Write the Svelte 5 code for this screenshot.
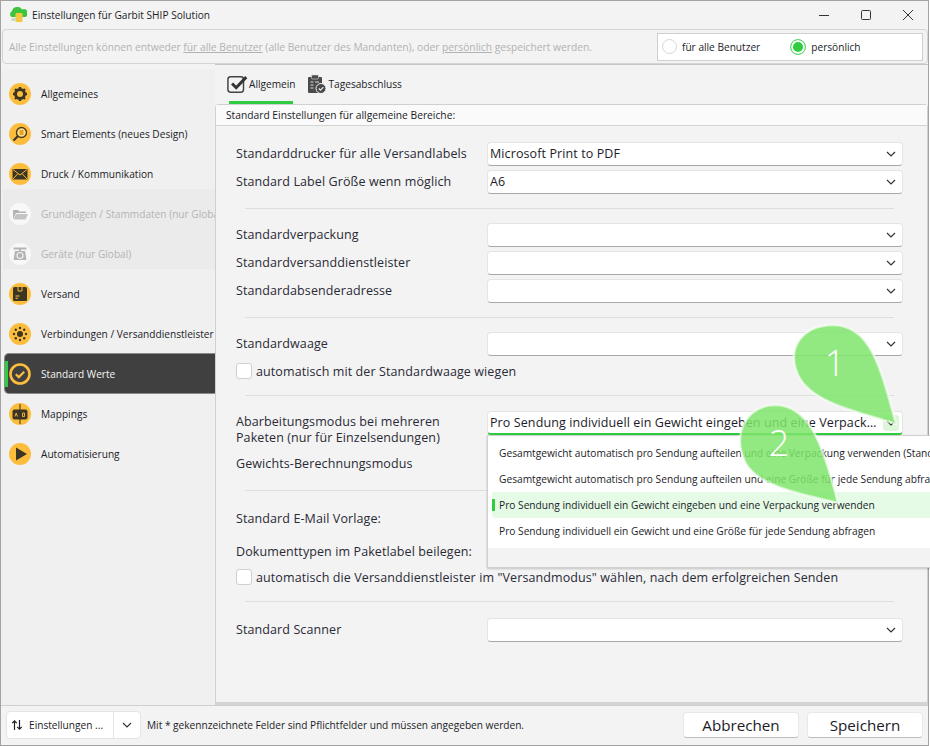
<script>
	const navItems = [
		{ label: 'Allgemeines', icon: 'gear' },
		{ label: 'Smart Elements (neues Design)', icon: 'search' },
		{ label: 'Druck / Kommunikation', icon: 'mail' },
		{ label: 'Grundlagen / Stammdaten (nur Global)', icon: 'folder', disabled: true },
		{ label: 'Geräte (nur Global)', icon: 'scale', disabled: true },
		{ label: 'Versand', icon: 'box' },
		{ label: 'Verbindungen / Versanddienstleister', icon: 'hub' },
		{ label: 'Standard Werte', icon: 'check', active: true },
		{ label: 'Mappings', icon: 'map' },
		{ label: 'Automatisierung', icon: 'play' }
	];

	const options = [
		'Gesamtgewicht automatisch pro Sendung aufteilen und eine Verpackung verwenden (Standard)',
		'Gesamtgewicht automatisch pro Sendung aufteilen und eine Größe für jede Sendung abfragen',
		'Pro Sendung individuell ein Gewicht eingeben und eine Verpackung verwenden',
		'Pro Sendung individuell ein Gewicht und eine Größe für jede Sendung abfragen'
	];
</script>

{#snippet chevron()}
	<svg class="chev" width="10" height="6" viewBox="0 0 10 6"><path d="M1 1l4 4 4-4" fill="none" stroke="#333" stroke-width="1.2" /></svg>
{/snippet}

{#snippet select(value = '', open = false)}
	<div class="select" class:open>
		<span class="value">{value}</span>
		<span class="arrow">{@render chevron()}</span>
	</div>
{/snippet}

{#snippet navIcon(name)}
	<svg width="22" height="22" viewBox="0 0 22 22">
		{#if name === 'gear'}
			<circle cx="11" cy="11" r="11" fill="#fdbd3c" />
			<circle cx="11" cy="11" r="4.5" fill="none" stroke="#3b3523" stroke-width="3" />
			<path d="M11 4v3M11 15v3M4 11h3M15 11h3M6 6l2 2M14 14l2 2M16 6l-2 2M8 14l-2 2" stroke="#3b3523" stroke-width="2.4" />
		{:else if name === 'search'}
			<circle cx="11" cy="11" r="11" fill="#fdbd3c" />
			<circle cx="12.5" cy="9.5" r="5" fill="#fde08e" stroke="#4a3a1a" stroke-width="1.4" />
			<rect x="10.5" y="7" width="4" height="5" fill="#e8a020" />
			<path d="M9 13l-4.5 4.5" stroke="#3b3523" stroke-width="2.2" />
		{:else if name === 'mail'}
			<circle cx="11" cy="11" r="11" fill="#fdbd3c" />
			<rect x="3.5" y="6" width="15" height="10.5" fill="#3b3523" />
			<path d="M4 6.5l7 5.5 7-5.5M4 16l5-5.5M18 16l-5-5.5" fill="none" stroke="#fdbd3c" stroke-width="1" />
		{:else if name === 'folder'}
			<circle cx="11" cy="11" r="11" fill="#f8f8f8" />
			<path d="M4 7h5l1.5 1.5H17V10H7l-3 6z" fill="#b4b4b4" />
			<path d="M7 11h12l-2.5 5.5H4.500z" fill="#c4c4c4" />
		{:else if name === 'scale'}
			<circle cx="11" cy="11" r="11" fill="#f8f8f8" />
			<rect x="4.500" y="4.500" width="13" height="2" fill="#b4b4b4" />
			<rect x="10" y="6" width="2" height="2" fill="#b4b4b4" />
			<path d="M6 8h10l1.500 9h-13z" fill="#b4b4b4" />
			<circle cx="11" cy="12.500" r="3" fill="none" stroke="#f2f2f2" stroke-width="1.200" />
		{:else if name === 'box'}
			<circle cx="11" cy="11" r="11" fill="#fdbd3c" />
			<rect x="4" y="4" width="14" height="14" rx="1.500" fill="#3b3523" />
			<path d="M9 4v4h4V4" fill="none" stroke="#fdbd3c" stroke-width="1" />
			<path d="M6.500 13h4M6.500 15.200h2.500" stroke="#fdbd3c" stroke-width="1.100" />
		{:else if name === 'hub'}
			<circle cx="11" cy="11" r="11" fill="#fdbd3c" />
			<circle cx="11" cy="11" r="3" fill="#3b3523" />
			<g fill="#3b3523">
				<circle cx="11" cy="5" r="1.200" /><circle cx="11" cy="17" r="1.200" /><circle cx="5" cy="11" r="1.200" /><circle cx="17" cy="11" r="1.200" />
				<circle cx="6.800" cy="6.800" r="1.200" /><circle cx="15.200" cy="6.800" r="1.200" /><circle cx="6.800" cy="15.200" r="1.200" /><circle cx="15.200" cy="15.200" r="1.200" />
			</g>
		{:else if name === 'check'}
			<circle cx="11" cy="11" r="9.500" fill="none" stroke="#fdbd3c" stroke-width="2.600" />
			<path d="M6.800 11.300l3 2.800 5.400-5.400" fill="none" stroke="#fdbd3c" stroke-width="2.200" />
		{:else if name === 'map'}
			<circle cx="11" cy="11" r="11" fill="#fdbd3c" />
			<rect x="3.500" y="6.500" width="15" height="10" rx="2" fill="#3b3523" />
			<path d="M11 1v20" stroke="#3b3523" stroke-width="1" />
			<path d="M6 13.500l1.200-3.500 1.200 3.500M13.500 10h2v3.500h-2z" fill="none" stroke="#fdbd3c" stroke-width=".9" />
		{:else}
			<circle cx="11" cy="11" r="11" fill="#fdbd3c" />
			<path d="M7 4.500l11 6.500-11 6.500z" fill="#3b3523" />
		{/if}
	</svg>
{/snippet}

<div class="window">
	<header class="titlebar">
		<svg class="logo" width="18" height="16" viewBox="0 0 18 16">
			<path d="M2.500 10a3.500 3.500 0 0 1 .5-6A5.500 5.500 0 0 1 13 2.500a4 4 0 0 1 3.500 7.500z" fill="#3cc43c" />
			<rect x="6.500" y="6" width="7" height="9" rx="1" fill="#f5c842" />
			<rect x="2.500" y="11" width="4" height="3" fill="#c6dcc6" />
		</svg>
		<span class="title">Einstellungen für Garbit SHIP Solution</span>
		<div class="wincontrols">
			<svg width="12" height="12" viewBox="0 0 12 12"><path d="M1 6.500h10" stroke="#333" stroke-width="1" /></svg>
			<svg width="12" height="12" viewBox="0 0 12 12"><rect x="1.500" y="1.500" width="9" height="9" rx="1" fill="none" stroke="#333" stroke-width="1" /></svg>
			<svg width="12" height="12" viewBox="0 0 12 12"><path d="M1 1l10 10M11 1L1 11" stroke="#333" stroke-width="1" /></svg>
		</div>
	</header>

	<div class="hint">
		<p>Alle Einstellungen können entweder <u>für alle Benutzer</u> (alle Benutzer des Mandanten), oder <u>persönlich</u> gespeichert werden.</p>
		<div class="scope">
			<label><span class="radio"></span>für alle Benutzer</label>
			<label><span class="radio on"></span>persönlich</label>
		</div>
	</div>

	<div class="body">
		<nav class="sidebar">
			{#each navItems as item}
				<div class="navitem" class:disabled={item.disabled} class:active={item.active}>
					{@render navIcon(item.icon)}
					<span>{item.label}</span>
				</div>
			{/each}
		</nav>

		<main class="content">
			<div class="tabs">
				<div class="tab current">
					<svg width="22" height="22" viewBox="0 0 24 22">
						<rect x="1" y="3" width="17" height="17" rx="3" fill="#f4f4f4" stroke="#444" stroke-width="1.600" />
						<path d="M5.500 10.500l4.500 4.500L21 3.500" fill="none" stroke="#333" stroke-width="3.200" />
					</svg>
					<span>Allgemein</span>
				</div>
				<div class="tab">
					<svg width="20" height="20" viewBox="0 0 20 20">
						<rect x="1" y="3" width="14" height="16" rx="1" fill="#4a4a4a" />
						<rect x="4.500" y="1" width="7" height="4" rx="1" fill="#4a4a4a" stroke="#ddd" stroke-width=".6" />
						<path d="M3.500 8h3M3.500 11h3M3.500 14h3M8 8h4" stroke="#ddd" stroke-width="1" />
						<circle cx="14" cy="14.500" r="5" fill="#4a4a4a" stroke="#f2f2f2" />
						<path d="M11.800 14.500l1.600 1.600 3-3" fill="none" stroke="#eee" stroke-width="1.200" />
					</svg>
					<span>Tagesabschluss</span>
				</div>
			</div>

			<section class="panel">
				<div class="panelhead">Standard Einstellungen für allgemeine Bereiche:</div>
				<div class="form">
					<div class="group">
						<div class="row"><span>Standarddrucker für alle Versandlabels</span>{@render select('Microsoft Print to PDF')}</div>
						<div class="row"><span>Standard Label Größe wenn möglich</span>{@render select('A6')}</div>
					</div>
					<div class="group">
						<div class="row"><span>Standardverpackung</span>{@render select()}</div>
						<div class="row"><span>Standardversanddienstleister</span>{@render select()}</div>
						<div class="row"><span>Standardabsenderadresse</span>{@render select()}</div>
					</div>
					<div class="group">
						<div class="row"><span>Standardwaage</span>{@render select()}</div>
						<label class="check"><span class="box"></span>automatisch mit der Standardwaage wiegen</label>
					</div>
					<div class="group">
						<div class="row tall"><span>Abarbeitungsmodus bei mehreren<br />Paketen (nur für Einzelsendungen)</span>{@render select('Pro Sendung individuell ein Gewicht eingeben und eine Verpackung verwenden', true)}</div>
						<div class="row"><span>Gewichts-Berechnungsmodus</span></div>
					</div>
					<div class="group">
						<div class="row mail"><span>Standard E-Mail Vorlage:</span></div>
						<div class="row doc"><span>Dokumenttypen im Paketlabel beilegen:</span></div>
						<label class="check"><span class="box"></span>automatisch die Versanddienstleister im "Versandmodus" wählen, nach dem erfolgreichen Senden</label>
					</div>
					<div class="group last">
						<div class="row"><span>Standard Scanner</span>{@render select()}</div>
					</div>
				</div>
			</section>
		</main>
	</div>

	<footer class="footer">
		<div class="split">
			<span class="splitmain">
				<svg width="12" height="12" viewBox="0 0 12 12"><path d="M3.500 11V2M1.200 4.200L3.500 1.800l2.300 2.400M8.500 1v9M6.200 7.800l2.300 2.400 2.300-2.400" fill="none" stroke="#222" stroke-width="1.200" /></svg>
				Einstellungen ...
			</span>
			<span class="splitarrow">{@render chevron()}</span>
		</div>
		<p>Mit * gekennzeichnete Felder sind Pflichtfelder und müssen angegeben werden.</p>
		<button>Abbrechen</button>
		<button>Speichern</button>
	</footer>

	<div class="dropdown">
		<div class="options">
			{#each options as option, i}
				<div class="option" class:selected={i === 2}>{option}</div>
			{/each}
		</div>
	</div>

	<svg class="drops" width="930" height="746" viewBox="0 0 930 746">
		<path class="drop" d="M896 424C860 412 812 404 798 375C786 348 802 325 834 325C870 326 880 365 896 424Z" />
		<path class="drop" d="M838 503C802 494 758 487 745 462C732 434 746 405 776 405C808 406 822 440 838 503Z" />
		<text x="835" y="376">1</text>
		<text x="779" y="456">2</text>
	</svg>
</div>

<style>
	:global(body) {
		margin: 0;
		background: #fff;
	}

	.window {
		position: relative;
		width: 929px;
		height: 746px;
		box-sizing: border-box;
		border: 1px solid #a3a3a3;
		background: #f3f3f3;
		color: #1c1c28;
		font-family: 'Open Sans', 'Noto Sans', sans-serif;
		font-size: 10.15px;
		display: flex;
		flex-direction: column;
	}

	.titlebar {
		height: 28px;
		display: flex;
		align-items: center;
		padding: 0 0 0 8px;
		gap: 5px;
		flex: none;
	}

	.wincontrols {
		margin-left: auto;
		display: flex;
		gap: 30px;
		padding-right: 14px;
	}

	.hint {
		flex: none;
		height: 35px;
		box-sizing: border-box;
		margin: 0 0 0 1px;
		border: 1px solid #d4d4d4;
		border-radius: 4px;
		display: flex;
		align-items: center;
		justify-content: space-between;
		padding: 0 4px 0 6px;
		color: #b2b2b2;
		font-size: 10.27px;
	}

	.hint p {
		margin: 0;
	}

	.scope {
		background: #fff;
		border: 1px solid #cfcfcf;
		width: 266px;
		height: 28px;
		box-sizing: border-box;
		display: flex;
		align-items: center;
		padding-left: 4px;
		gap: 30px;
		color: #1c1c28;
		font-size: 10.15px;
	}

	.scope label {
		display: flex;
		align-items: center;
		gap: 5px;
	}

	.radio {
		width: 15px;
		height: 15px;
		box-sizing: border-box;
		border-radius: 50%;
		border: 1px solid #d6d6d6;
		background: #fff;
	}

	.radio.on {
		width: 16px;
		height: 16px;
		background: #2ecc40;
		border: 1px solid #5fdc6c;
		box-shadow: inset 0 0 0 2px #fff;
	}

	.body {
		flex: 1;
		display: flex;
		min-height: 0;
	}

	.sidebar {
		width: 214px;
		flex: none;
		margin-top: 5px;
		background: #f0f0f0;
		display: flex;
		flex-direction: column;
		overflow: hidden;
	}

	.navitem {
		height: 40px;
		flex: none;
		box-sizing: border-box;
		padding: 10px 0 0 6px;
		display: flex;
		align-items: center;
		gap: 10px;
		white-space: nowrap;
		margin-left: 2px;
		overflow: hidden;
	}

	.navitem svg {
		flex: none;
	}

	.navitem.disabled {
		background: #ebebeb;
		color: #b4b4b4;
	}

	.navitem.active {
		position: relative;
		background: #404040;
		color: #f4f4f4;
		border-radius: 5px 0 0 5px;
		border: 1px solid #8a8a8a;
		border-right: 0;
		height: 41px;
		margin: 4px 0 -5px 3px;
		padding: 0 0 0 4px;
	}

	.navitem.active::before {
		content: '';
		position: absolute;
		left: 0;
		top: 7px;
		width: 3px;
		height: 26px;
		background: #2ecc40;
	}

	.content {
		flex: 1;
		min-width: 0;
		display: flex;
		flex-direction: column;
	}

	.tabs {
		height: 39px;
		flex: none;
		display: flex;
		align-items: center;
		padding-left: 12px;
		gap: 11px;
		border-top: 1px solid #c6c6c6;
	}

	.tab {
		display: flex;
		align-items: center;
		gap: 2px;
		height: 100%;
		box-sizing: border-box;
		padding-bottom: 2px;
		position: relative;
	}

	.tab.current {
		gap: 0;
	}

	.tab.current::after {
		content: '';
		position: absolute;
		left: 2px;
		right: 3px;
		bottom: 0;
		height: 3px;
		background: #2ecc40;
	}

	.panel {
		flex: 1;
		border: 1px solid #d0d0d0;
		border-bottom: 3px solid #d4d4d4;
		border-radius: 4px 4px 0 0;
		display: flex;
		flex-direction: column;
		min-height: 0;
	}

	.panelhead {
		height: 20px;
		flex: none;
		background: #fafafa;
		border-bottom: 1px solid #d4d4d4;
		display: flex;
		align-items: center;
		padding-left: 10px;
		font-size: 10.25px;
	}

	.form {
		padding: 16px 24px 0 20px;
		font-size: 12.5px;
		color: #2a2a36;
		letter-spacing: 0.1px;
	}

	.group {
		display: flex;
		flex-direction: column;
		gap: 4px;
		margin-bottom: 14px;
	}

	.group::after {
		content: '';
		height: 1px;
		margin: 10px 9px 0;
		background: #dedede;
	}

	.group.last {
		padding-top: 2px;
	}

	.group.last::after {
		display: none;
	}

	.row {
		display: flex;
		align-items: center;
		justify-content: space-between;
		min-height: 24px;
		line-height: 16px;
	}

	.row.tall {
		min-height: 37px;
		align-items: flex-start;
		margin-top: 1px;
	}

	.row.tall > span {
		margin-top: 3px;
	}

	.row.mail {
		margin-top: 2px;
	}

	.row.doc {
		margin: 5px 0 -2px;
	}

	.select {
		width: 416px;
		height: 24px;
		flex: none;
		box-sizing: border-box;
		background: #fff;
		border: 1px solid #e4e4e4;
		border-bottom-color: #a8a8a8;
		border-radius: 4px;
		display: flex;
		align-items: center;
		justify-content: space-between;
		padding: 0 3px 0 2px;
	}

	.select .value {
		white-space: nowrap;
		overflow: hidden;
		text-overflow: ellipsis;
		max-width: 390px;
		color: #1c1c28;
	}

	.arrow {
		width: 16px;
		height: 16px;
		display: flex;
		align-items: center;
		justify-content: center;
		border-radius: 3px;
	}

	.select.open {
		border-bottom: 2px solid #2ecc40;
	}

	.select.open .arrow {
		background: #dcf6d8;
	}

	.chev {
		flex: none;
	}

	.check {
		display: flex;
		align-items: center;
		gap: 4px;
		height: 20px;
		margin-top: 1px;
	}

	.box {
		width: 16px;
		height: 16px;
		box-sizing: border-box;
		background: #fff;
		border: 1px solid #cfcfcf;
		border-radius: 3px;
	}

	.footer {
		height: 40px;
		flex: none;
		display: flex;
		align-items: center;
		padding: 0 5px 2px 5px;
		border-top: 1px solid #cfcfcf;
		box-sizing: border-box;
	}

	.footer p {
		margin: 0 auto 0 6px;
	}

	.split {
		display: flex;
		height: 26px;
		background: #fff;
		border: 1px solid #e4e4e4;
		border-radius: 4px;
		align-items: center;
	}

	.splitmain {
		width: 106px;
		display: flex;
		align-items: center;
		gap: 6px;
		padding-left: 4px;
		box-sizing: border-box;
	}

	.splitarrow {
		width: 26px;
		height: 100%;
		border-left: 1px solid #e4e4e4;
		display: flex;
		align-items: center;
		justify-content: center;
	}

	.footer button {
		width: 116px;
		height: 26px;
		margin-left: 8px;
		background: #fff;
		border: 1px solid #e8e8e8;
		border-bottom-color: #bdbdbd;
		border-radius: 4px;
		font: inherit;
		font-size: 15.2px;
		color: #1c1c28;
		padding: 0;
	}

	.dropdown {
		position: absolute;
		left: 486px;
		top: 434px;
		width: 444px;
		height: 133px;
		background: #f3f3f3;
		border: 1px solid #d0d0d0;
		border-right: 0;
		box-shadow: 0 1px 2px rgba(0, 0, 0, 0.2);
		box-sizing: border-box;
		overflow: hidden;
	}

	.options {
		background: #fff;
		padding: 4px 0;
	}

	.option {
		height: 26px;
		display: flex;
		align-items: center;
		padding-left: 11px;
		white-space: nowrap;
		font-size: 10.2px;
		position: relative;
	}

	.option.selected {
		background: #e5fbe6;
		margin-left: 4px;
		padding-left: 7px;
		border-radius: 3px 0 0 3px;
	}

	.option.selected::before {
		content: '';
		position: absolute;
		left: 0;
		top: 7px;
		height: 12px;
		width: 3px;
		background: #2ecc40;
	}

	.drops {
		position: absolute;
		left: -1px;
		top: -1px;
		pointer-events: none;
	}

	.drop {
		fill: #7fe56b;
		fill-opacity: 0.85;
		stroke: #fff;
		stroke-opacity: 0.6;
		stroke-width: 2.5;
	}

	.drops text {
		fill: #fff;
		font-family: 'Open Sans', sans-serif;
		font-weight: 300;
		font-size: 36px;
		text-anchor: middle;
	}
</style>
